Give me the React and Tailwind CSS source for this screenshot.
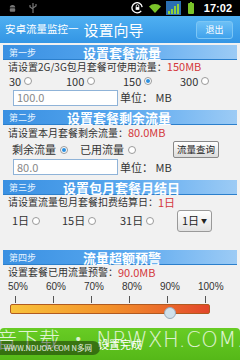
const font = { fontFamily: '"Noto Sans CJK SC", "Noto Sans", sans-serif' };

function Radio({ on }) {
  return (
    <span className="inline-flex w-[8px] h-[8px] rounded-full border border-[#9a9a9a] bg-white items-center justify-center">
      {on && <span className="w-[4px] h-[4px] rounded-full bg-[#2b8fe0]" />}
    </span>
  );
}

function StepBar({ step, title, titleX }) {
  return (
    <div className="mx-[3px] h-[15px] flex items-center bg-gradient-to-r from-[#3a90e2] via-[#55a6ee] to-[#9ccbf5] border-b border-[#2b7fcc]">
      <span className="text-[9px] text-[#e4f2ff] pl-[6px] w-[60px] shrink-0 leading-none">{step}</span>
      <span className={`text-[13px] font-bold text-white leading-none whitespace-nowrap ${titleX}`}>{title}</span>
    </div>
  );
}

function Input({ value }) {
  return (
    <div className="w-[105px] h-[16px] ml-[13px] border border-[#8fb3d8] bg-white flex items-center px-[3px] text-[11px] text-[#888] leading-none">
      {value}
    </div>
  );
}

export default function App() {
  return (
    <div className="w-[240px] h-[360px] overflow-hidden relative bg-[#f1f1f1]" style={font}>
      {/* status bar */}
      <div className="h-[16px] bg-black flex items-center px-[8px]">
        <svg width="9" height="9" viewBox="0 0 10 10" className="mr-[12px]">
          <path d="M2 4 a3 3 0 0 1 6 0 z" fill="#777" />
          <rect x="2" y="4.6" width="6" height="4" rx="1" fill="#777" />
        </svg>
        <svg width="8" height="10" viewBox="0 0 8 10">
          <path d="M4 0 v10 M4 6 L1 4 V2 M4 5 L7 3 V1" stroke="#777" strokeWidth="1.2" fill="none" />
        </svg>
        <div className="flex-1" />
        <svg width="13" height="12" viewBox="0 0 14 12" className="mr-[5px]">
          <path d="M11 9 A5.5 5.5 0 1 1 12 5" stroke="#fff" strokeWidth="1.4" fill="none" />
          <rect x="5" y="5" width="4" height="3" fill="#fff" />
          <path d="M5.6 5 V3.8 a1.4 1.4 0 0 1 2.8 0 V5" stroke="#fff" strokeWidth="0.9" fill="none" />
        </svg>
        <svg width="12" height="9" viewBox="0 0 12 9" className="mr-[5px]">
          <path d="M6 9 L0 2.5 A8.5 8.5 0 0 1 12 2.5 Z" fill="#7bc42a" />
        </svg>
        <div className="w-[15px] h-[14px] bg-[#2a6fb3] flex items-end justify-center gap-[1px] pb-[1px] mr-[7px]">
          <span className="w-[2px] h-[3px] bg-[#8fd03a]" />
          <span className="w-[2px] h-[5px] bg-[#8fd03a]" />
          <span className="w-[2px] h-[8px] bg-[#8fd03a]" />
          <span className="w-[2px] h-[10px] bg-[#8fd03a]" />
        </div>
        <div className="w-[6px] h-[11px] bg-[#7bc42a] rounded-[1px] mr-[10px] relative">
          <span className="absolute -top-[1px] left-[2px] w-[2px] h-[1px] bg-[#7bc42a]" />
        </div>
        <span className="text-white text-[11px] font-bold leading-none" style={{ fontFamily: '"Liberation Sans", sans-serif' }}>17:02</span>
      </div>

      {/* header */}
      <div className="h-[27px] bg-gradient-to-b from-[#4fb0f2] to-[#3395e4] flex items-center pl-[5px] pr-[7px]">
        <span className="text-white text-[10.5px] leading-none">安卓流量监控一</span>
        <span className="text-white text-[15px] leading-none ml-[5px]">设置向导</span>
        <div className="flex-1" />
        <div className="w-[37px] h-[18px] rounded-[3px] bg-gradient-to-b from-[#6cc0f6] to-[#3fa2ec] border border-[#7cc6f5] flex items-center justify-center text-white text-[9px] leading-none">
          退出
        </div>
      </div>

      <div className="h-[2px]" />

      {/* step 1 */}
      <StepBar step="第一步" title="设置套餐流量" titleX="ml-[20px]" />
      <div className="h-[13px] flex items-center pl-[8px] text-[10px] text-[#333] leading-none">
        请设置2G/3G包月套餐可使用流量：<span className="text-[#d4383c] text-[11px]">150MB</span>
      </div>
      <div className="h-[16px] flex items-center text-[11px] text-[#333] leading-none">
        <span className="w-[66px] pl-[9px] flex items-center gap-[3px]">30 <Radio /></span>
        <span className="w-[57px] flex items-center gap-[3px]">100 <Radio /></span>
        <span className="w-[57px] flex items-center gap-[3px]">150 <Radio on /></span>
        <span className="flex items-center gap-[3px]">300 <Radio /></span>
      </div>
      <div className="h-[17px] flex items-center">
        <Input value="100.0" />
        <span className="ml-[2px] text-[11px] text-[#333] leading-none">单位： MB</span>
      </div>

      <div className="h-[4px]" />

      {/* step 2 */}
      <StepBar step="第二步" title="设置套餐剩余流量" titleX="ml-[4px]" />
      <div className="h-[15px] flex items-center pl-[8px] text-[10px] text-[#333] leading-none">
        请设置本月套餐剩余流量：<span className="text-[#d4383c] text-[11px]">80.0MB</span>
      </div>
      <div className="h-[19px] flex items-center text-[11px] text-[#333] leading-none">
        <span className="w-[80px] pl-[12px] flex items-center gap-[4px]">剩余流量 <Radio on /></span>
        <span className="w-[93px] flex items-center gap-[4px]">已用流量 <Radio /></span>
        <span className="h-[17px] px-[3px] border border-[#888] rounded-[2px] bg-gradient-to-b from-white to-[#dcdcdc] flex items-center text-[9.5px] text-[#222]">流量查询</span>
      </div>
      <div className="h-[16px] flex items-center">
        <Input value="80.0" />
        <span className="ml-[2px] text-[11px] text-[#333] leading-none">单位： MB</span>
      </div>

      <div className="h-[5px]" />

      {/* step 3 */}
      <StepBar step="第三步" title="设置包月套餐月结日" titleX="" />
      <div className="h-[14px] flex items-center pl-[8px] text-[10px] text-[#333] leading-none">
        请设置流量包月套餐扣费结算日：<span className="text-[#d4383c] text-[11px]">1日</span>
      </div>
      <div className="h-[23px] flex items-center text-[11px] text-[#333] leading-none">
        <span className="w-[62px] pl-[12px] flex items-center gap-[3px]">1日 <Radio /></span>
        <span className="w-[58px] flex items-center gap-[3px]">15日 <Radio /></span>
        <span className="w-[57px] flex items-center gap-[3px]">31日 <Radio /></span>
        <span className="h-[22px] w-[35px] border border-[#999] rounded-[3px] bg-gradient-to-b from-white to-[#e2e2e2] flex items-center justify-center gap-[2px] text-[11px] text-[#222]">
          1日<span className="text-[6px]">▼</span>
        </span>
      </div>

      <div className="h-[18px]" />

      {/* step 4 */}
      <StepBar step="第四步" title="流量超额预警" titleX="ml-[20px]" />
      <div className="h-[14px] flex items-center pl-[8px] text-[10px] text-[#333] leading-none">
        设置套餐已用流量预警：<span className="text-[#d4383c] text-[11px]">90.0MB</span>
      </div>
      <div className="h-[15px] pl-[8px] grid grid-cols-[38px_38px_38px_38px_38px_38px] items-center text-[10px] text-[#333] leading-none" style={{ fontFamily: '"Liberation Sans", sans-serif' }}>
        <span>50%</span><span>60%</span><span>70%</span><span>80%</span><span>90%</span><span>100%</span>
      </div>
      <div className="h-[10px] pl-[8px] grid grid-cols-[38px_38px_38px_38px_38px_38px] items-start pt-[2px]">
        {[0, 1, 2, 3, 4, 5].map(i => (
          <span key={i} className="ml-[7px] w-[1px] h-[7px] bg-[#555]" />
        ))}
      </div>
      <div className="relative mx-[10px] w-[200px] h-[10px] rounded-[2px] border border-[#b05a20] bg-gradient-to-r from-[#f8c23a] via-[#f2902a] to-[#e2452a]">
        <span className="absolute left-[153px] top-[2px] w-[12px] h-[12px] rounded-full bg-[#cfe0ea] border border-[#9ab]" />
      </div>

      {/* finish button */}
      <div className="absolute left-0 right-0 top-[328px] h-[32px] bg-gradient-to-b from-[#68cc24] to-[#55b818] rounded-t-[4px] flex items-center justify-center text-white text-[11px] leading-none">
        设置完成
      </div>

      {/* watermarks */}
      <div className="absolute left-[-4px] top-[330px] text-[21px] text-white/80 leading-none whitespace-nowrap tracking-[0.5px]" style={{ fontFamily: '"DejaVu Sans", "Noto Sans CJK SC", sans-serif', fontWeight: 300 }}>
        音下载 • NRWXH.COM.C
      </div>
      <div className="absolute left-[0px] top-[341px] w-[100px] h-[14px] rounded-r-full bg-black/40 flex items-center pl-[4px] text-[7.5px] text-white/90 leading-none whitespace-nowrap">
        WWW.NDUOA.COM N多网
      </div>
    </div>
  );
}
